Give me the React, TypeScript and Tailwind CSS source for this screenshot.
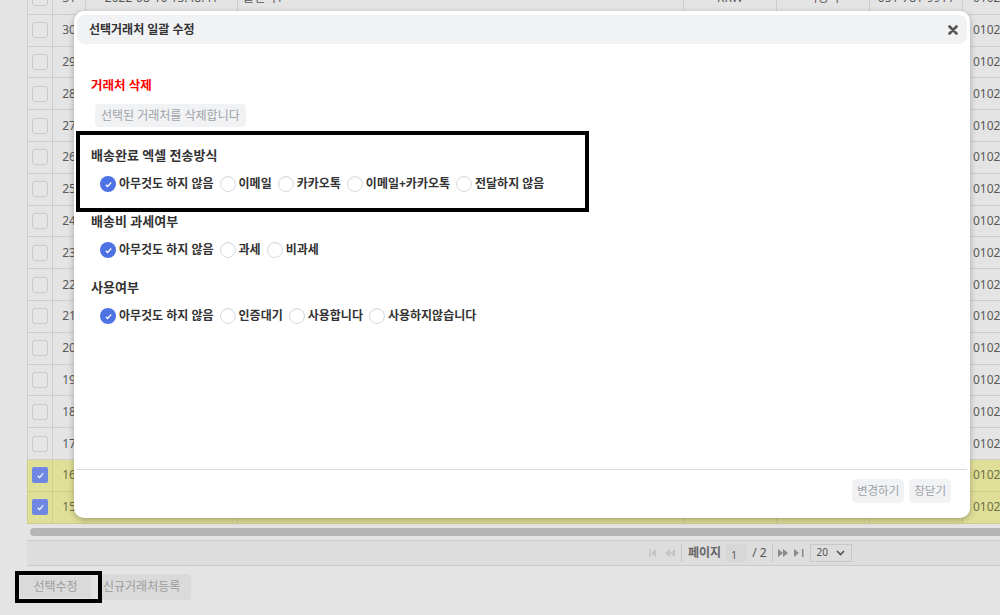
import React from 'react'

// 배경 목록 (오버레이로 어둡게 보이는 상태)
const ROWS = Array.from({ length: 17 }, (_, i) => 31 - i)

function Checkbox({ checked }: { checked: boolean }) {
  return checked ? (
    <span className="flex w-[16px] h-[16px] items-center justify-center rounded-[2px] bg-[#6d87e2]">
      <svg width="9" height="9" viewBox="0 0 10 10"><path d="M2 5.3l2 2 4-4.6" fill="none" stroke="#fff" strokeWidth="1.3" /></svg>
    </span>
  ) : (
    <span className="block w-[16px] h-[16px] rounded-[3px] border border-[#c9c9c9] bg-[#e6e6e6]" />
  )
}

function Row({ n }: { n: number }) {
  const hl = n === 16 || n === 15
  const cell = `shrink-0 h-full border-r ${hl ? 'border-[#cfcd8c]' : 'border-[#cdcdcd]'} flex items-center`
  return (
    <div className={`flex h-[31.8px] border-b ${hl ? 'bg-[#e0df98] border-[#cfcd8c] text-[#6f6f48]' : 'border-[#cdcdcd] text-[#5a5a5a]'} text-[12px]`}>
      <div className={`${cell} w-[26px] justify-center border-l`}><Checkbox checked={hl} /></div>
      <div className={`${cell} w-[33px] justify-center`}>{n}</div>
      <div className={`${cell} w-[152px] justify-center`}>{n === 31 ? '2022-08-16 13:48:41' : ''}</div>
      <div className={`${cell} w-[446px] pl-[5px]`}>{n === 31 ? '클렌미1' : ''}</div>
      <div className={`${cell} w-[93px] justify-center`}>{n === 31 ? 'KRW' : ''}</div>
      <div className={`${cell} w-[93px] justify-center`}>{n === 31 ? '석성국' : ''}</div>
      <div className={`${cell} w-[93px] justify-center`}>{n === 31 ? '051-781-9911' : ''}</div>
      <div className={`${cell} w-[80px] pl-[10px]`}>01027</div>
    </div>
  )
}

function Radio({ label, checked }: { label: string; checked?: boolean }) {
  return (
    <label className="flex items-center gap-[3px] mr-[6px]">
      {checked ? (
        <span className="flex w-[16px] h-[16px] items-center justify-center rounded-full bg-[#4d72e4]">
          <svg width="9" height="9" viewBox="0 0 10 10"><path d="M2 5.2l2 2 4-4.4" fill="none" stroke="#fff" strokeWidth="1.4" /></svg>
        </span>
      ) : (
        <span className="block w-[16px] h-[16px] rounded-full border border-[#d8dbe0] bg-white shadow-[inset_0_1px_1px_rgba(0,0,0,0.06)]" />
      )}
      <span className="text-[12px] font-bold text-[#333] leading-[16px] whitespace-nowrap">{label}</span>
    </label>
  )
}

function Section({ title, options, className = '' }: { title: string; options: string[]; className?: string }) {
  return (
    <div className={className}>
      <div className="text-[13px] font-bold text-[#333] leading-[16px]">{title}</div>
      <div className="flex mt-[13px] ml-[9px]">
        {options.map((o, i) => <Radio key={o} label={o} checked={i === 0} />)}
      </div>
    </div>
  )
}

function PageBtn({ d, c }: { d: string; c: string }) {
  return (
    <svg width="11" height="8" viewBox="0 0 11 8"><path d={d} fill={c} /></svg>
  )
}

export default function App() {
  return (
    <div
      className="relative w-[1000px] h-[615px] overflow-hidden bg-[#e4e4e4]"
      style={{ fontFamily: '"Noto Sans", "Noto Sans CJK KR", sans-serif' }}
    >
      {/* 목록 */}
      <div className="ml-[27px] mt-[-17px] w-[1100px]">
        {ROWS.map(n => <Row key={n} n={n} />)}
        <div className="h-[16px] pt-[4px] pl-[3px]">
          <div className="h-[8px] rounded-full bg-[#b5b5b5]" />
        </div>
        <div className="h-[26px] border-y border-[#cbcbcb] bg-[#dddddd] flex items-center pl-[622px] gap-[5px] text-[12px] text-[#555]">
          <PageBtn d="M0 0h1.5v8H0zM2 4l5-4v8z" c="#c4c4c4" />
          <PageBtn d="M0 4l5-4v8zM5 4l5-4v8z" c="#c4c4c4" />
          <span className="w-px h-[18px] bg-[#c6c6c6]" />
          <span className="font-bold text-[#666] ml-[1px]">페이지</span>
          <span className="w-[21px] h-[18px] rounded-[3px] bg-[#d7d7d7] text-[10px] pl-[5px] pt-[3px] leading-[16px]">1</span>
          <span className="text-[#555]">/ 2</span>
          <span className="w-px h-[18px] bg-[#c6c6c6]" />
          <PageBtn d="M0 0l5 4-5 4zM5 0l5 4-5 4z" c="#8a8a8a" />
          <PageBtn d="M0 0l5 4-5 4zM8 0h1.5v8H8z" c="#8a8a8a" />
          <span className="w-[42px] h-[18px] border border-[#c8c8c8] flex items-center justify-between px-[6px] text-[10px] text-[#555]">
            20
            <svg width="9" height="6" viewBox="0 0 9 6"><path d="M1 1l3.5 3.5L8 1" fill="none" stroke="#555" strokeWidth="1.6" /></svg>
          </span>
        </div>
      </div>

      {/* 하단 버튼 */}
      <div className="flex items-center mt-[5px] ml-[15px]">
        <div className="border-[4px] border-black h-[32px] w-[87px] flex items-center pl-[1px] relative z-10">
          <span className="h-[22px] w-[71px] bg-[#dadada] text-[12px] text-[#9c9c9c] flex items-center justify-center">선택수정</span>
        </div>
        <span className="-ml-[4px] h-[26px] w-[93px] rounded-[4px] bg-[#dadada] text-[12px] text-[#9c9c9c] flex items-center pl-[5px]">신규거래처등록</span>
      </div>

      {/* 일괄 수정 모달 */}
      <div className="absolute left-[74px] top-[11px] w-[896px] h-[507px] bg-white rounded-[10px] shadow-[0_2px_6px_rgba(0,0,0,0.28)] flex flex-col">
        <div className="mt-[4px] mx-[3px] h-[29px] rounded-[8px] bg-[#f1f2f4] flex items-center justify-between pl-[12px] pr-[9px]">
          <span className="text-[12px] font-bold text-[#333]">선택거래처 일괄 수정</span>
          <svg width="10" height="10" viewBox="0 0 10 10"><path d="M1.5 1.5l7 7M8.5 1.5l-7 7" stroke="#555" strokeWidth="2.6" strokeLinecap="round" /></svg>
        </div>

        <div className="flex-1 pl-[17px]">
          <div className="mt-[34px] text-[12.5px] font-bold text-[#ff0000] leading-[16px]">거래처 삭제</div>
          <button type="button" className="mt-[10px] ml-[4px] h-[23px] px-[6px] rounded-[4px] bg-[#f1f2f4] text-[12px] text-[#9ea2a8]">
            선택된 거래처를 삭제합니다
          </button>

          <div className="mt-[4px] -ml-[15px] w-[513px] border-[4px] border-black pl-[11px] pt-[12px] pb-[16px]">
            <Section title="배송완료 엑셀 전송방식" options={['아무것도 하지 않음', '이메일', '카카오톡', '이메일+카카오톡', '전달하지 않음']} />
          </div>
          <Section className="mt-[1px]" title="배송비 과세여부" options={['아무것도 하지 않음', '과세', '비과세']} />
          <Section className="mt-[21px]" title="사용여부" options={['아무것도 하지 않음', '인증대기', '사용합니다', '사용하지않습니다']} />
        </div>

        <div className="mx-[2px] mr-[3px] h-[49px] border-t border-[#dcdcdc] flex justify-end items-start pt-[9px] pr-[16px] gap-[5px]">
          <button type="button" className="h-[24px] px-[5px] rounded-[5px] bg-[#f1f2f4] text-[11.5px] text-[#9ea2a8]">변경하기</button>
          <button type="button" className="h-[24px] px-[5px] rounded-[5px] bg-[#f1f2f4] text-[11.5px] text-[#9ea2a8]">창닫기</button>
        </div>
      </div>
    </div>
  )
}
